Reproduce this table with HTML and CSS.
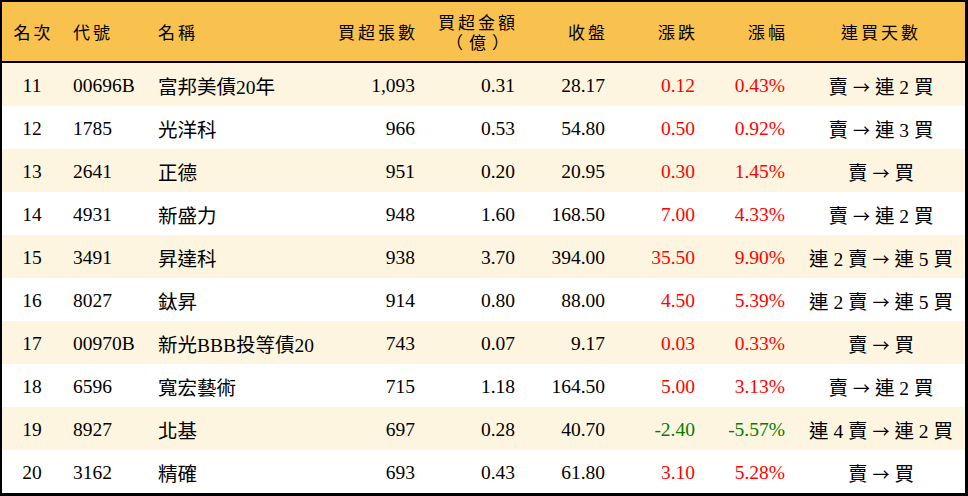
FILE: index.html
```html
<!DOCTYPE html>
<html lang="zh-Hant">
<head>
<meta charset="utf-8">
<link rel="stylesheet" href="styles.css">
</head>
<body>
<div class="board">
  <div class="row head">
    <div class="c c1">名次</div>
    <div class="c c2">代號</div>
    <div class="c c3">名稱</div>
    <div class="c c4">買超張數</div>
    <div class="c c5"><div class="line">買超金額</div><div class="line sub">（億）</div></div>
    <div class="c c6">收盤</div>
    <div class="c c7">漲跌</div>
    <div class="c c8">漲幅</div>
    <div class="c c9">連買天數</div>
  </div>
  <div class="row odd">
    <div class="c c1">11</div><div class="c c2">00696B</div><div class="c c3">富邦美債20年</div>
    <div class="c c4">1,093</div><div class="c c5">0.31</div><div class="c c6">28.17</div>
    <div class="c c7 up">0.12</div><div class="c c8 up">0.43%</div><div class="c c9">賣 <span class="arr">→</span> 連 2 買</div>
  </div>
  <div class="row">
    <div class="c c1">12</div><div class="c c2">1785</div><div class="c c3">光洋科</div>
    <div class="c c4">966</div><div class="c c5">0.53</div><div class="c c6">54.80</div>
    <div class="c c7 up">0.50</div><div class="c c8 up">0.92%</div><div class="c c9">賣 <span class="arr">→</span> 連 3 買</div>
  </div>
  <div class="row odd">
    <div class="c c1">13</div><div class="c c2">2641</div><div class="c c3">正德</div>
    <div class="c c4">951</div><div class="c c5">0.20</div><div class="c c6">20.95</div>
    <div class="c c7 up">0.30</div><div class="c c8 up">1.45%</div><div class="c c9">賣 <span class="arr">→</span> 買</div>
  </div>
  <div class="row">
    <div class="c c1">14</div><div class="c c2">4931</div><div class="c c3">新盛力</div>
    <div class="c c4">948</div><div class="c c5">1.60</div><div class="c c6">168.50</div>
    <div class="c c7 up">7.00</div><div class="c c8 up">4.33%</div><div class="c c9">賣 <span class="arr">→</span> 連 2 買</div>
  </div>
  <div class="row odd">
    <div class="c c1">15</div><div class="c c2">3491</div><div class="c c3">昇達科</div>
    <div class="c c4">938</div><div class="c c5">3.70</div><div class="c c6">394.00</div>
    <div class="c c7 up">35.50</div><div class="c c8 up">9.90%</div><div class="c c9">連 2 賣 <span class="arr">→</span> 連 5 買</div>
  </div>
  <div class="row">
    <div class="c c1">16</div><div class="c c2">8027</div><div class="c c3">鈦昇</div>
    <div class="c c4">914</div><div class="c c5">0.80</div><div class="c c6">88.00</div>
    <div class="c c7 up">4.50</div><div class="c c8 up">5.39%</div><div class="c c9">連 2 賣 <span class="arr">→</span> 連 5 買</div>
  </div>
  <div class="row odd">
    <div class="c c1">17</div><div class="c c2">00970B</div><div class="c c3">新光BBB投等債20</div>
    <div class="c c4">743</div><div class="c c5">0.07</div><div class="c c6">9.17</div>
    <div class="c c7 up">0.03</div><div class="c c8 up">0.33%</div><div class="c c9">賣 <span class="arr">→</span> 買</div>
  </div>
  <div class="row">
    <div class="c c1">18</div><div class="c c2">6596</div><div class="c c3">寬宏藝術</div>
    <div class="c c4">715</div><div class="c c5">1.18</div><div class="c c6">164.50</div>
    <div class="c c7 up">5.00</div><div class="c c8 up">3.13%</div><div class="c c9">賣 <span class="arr">→</span> 連 2 買</div>
  </div>
  <div class="row odd">
    <div class="c c1">19</div><div class="c c2">8927</div><div class="c c3">北基</div>
    <div class="c c4">697</div><div class="c c5">0.28</div><div class="c c6">40.70</div>
    <div class="c c7 down">-2.40</div><div class="c c8 down">-5.57%</div><div class="c c9">連 4 賣 <span class="arr">→</span> 連 2 買</div>
  </div>
  <div class="row">
    <div class="c c1">20</div><div class="c c2">3162</div><div class="c c3">精確</div>
    <div class="c c4">693</div><div class="c c5">0.43</div><div class="c c6">61.80</div>
    <div class="c c7 up">3.10</div><div class="c c8 up">5.28%</div><div class="c c9">賣 <span class="arr">→</span> 買</div>
  </div>
</div>
</body>
</html>
```
FILE: styles.css
```css
html, body {
  margin: 0;
  padding: 0;
  background: #ffffff;
}
.board {
  box-sizing: border-box;
  width: 968px;
  height: 496px;
  border-style: solid;
  border-color: #000000;
  border-width: 2px 3px 3px 2px;
  overflow: hidden;
  font-family: "Liberation Serif", "Noto Sans CJK TC", serif;
  font-size: 19.5px;
  color: #000000;
}
.row {
  display: grid;
  grid-template-columns: 60px 88px 180px 94px 100px 90px 90px 93px 1fr;
  height: 43px;
  align-items: center;
  background: #ffffff;
  padding-top: 2px;
  box-sizing: border-box;
}
.row.odd {
  background: #fef5e0;
}
.row.head {
  height: 61px;
  padding-top: 0;
  background: #f9c14e;
  border-bottom: 2px solid #000000;
  font-family: "Noto Sans CJK TC", serif;
  font-size: 17px;
  letter-spacing: 3px;
  line-height: 18px;
}
.c {
  white-space: nowrap;
}
.c1 { text-align: center; }
.c2 { padding-left: 11px; }
.c3 { padding-left: 8px; }
.c4, .c5, .c6, .c7, .c8 { text-align: right; }
.c4 { padding-right: 9px; }
.c5 { padding-right: 9px; }
.c6 { padding-right: 9px; }
.c7 { padding-right: 9px; }
.c8 { padding-right: 12px; }
.c9 { text-align: center; }
.arr {
  font-family: "Noto Sans CJK TC", sans-serif;
  font-size: 17px;
}
.head .c1 { padding-left: 3px; }
.head .c4, .head .c5, .head .c6, .head .c7, .head .c8 { margin-right: -3px; }
.head .c5 {
  display: flex;
  flex-direction: column;
  align-items: flex-end;
  gap: 1px;
}
.head .c5 .line {
  display: block;
  height: 19px;
  line-height: 19px;
}
.head .c5 .sub {
  letter-spacing: 6px;
  margin-right: 3px;
}
.up { color: #ff0000; }
.down { color: #008000; }
```
